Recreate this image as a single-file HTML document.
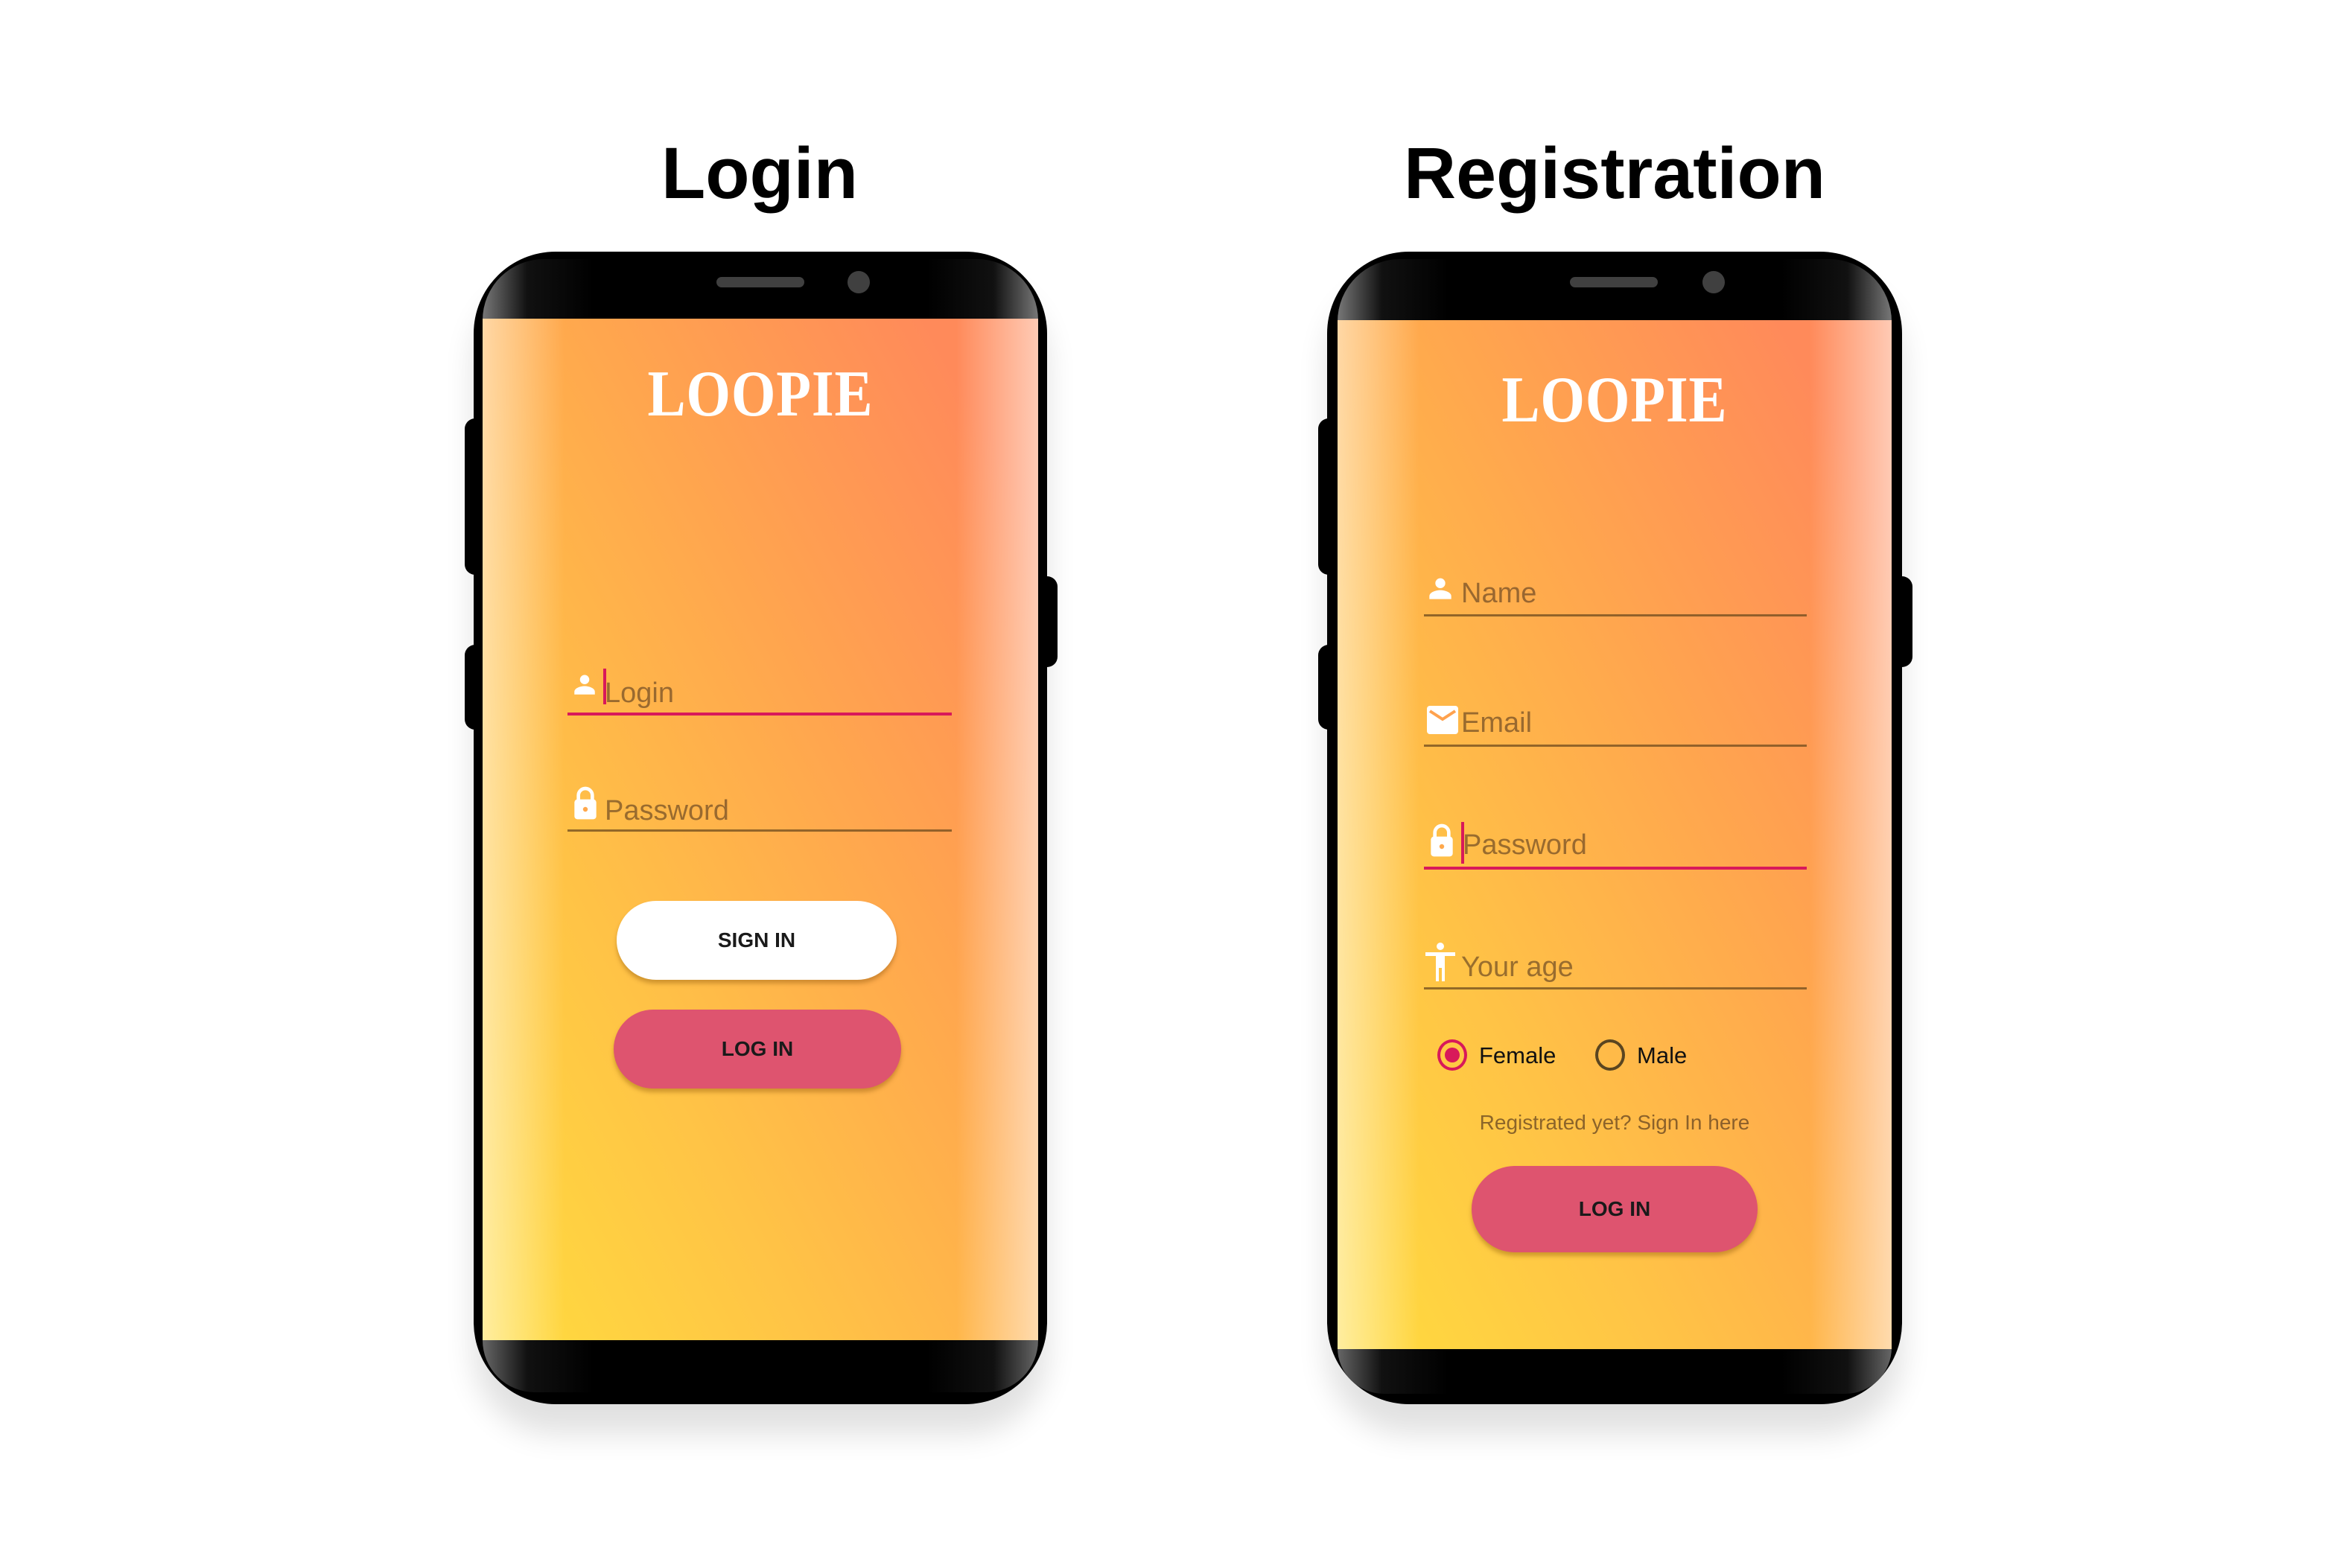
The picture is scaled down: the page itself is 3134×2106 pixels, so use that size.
<!DOCTYPE html>
<html><head><meta charset="utf-8"><style>
*{margin:0;padding:0;box-sizing:border-box}
body{width:3134px;height:2106px;background:#fff;position:relative;overflow:hidden;font-family:"Liberation Sans",sans-serif}
.abs{position:absolute}
.title{position:absolute;font-weight:bold;font-size:97px;color:#000;text-align:center;top:184px;line-height:1}
.phone{position:absolute;background:#000;border-radius:110px;box-shadow:0 40px 40px rgba(0,0,0,0.12)}
.btn-side{position:absolute;background:#000;border-radius:14px}
.bez{position:absolute;border-radius:90px 90px 0 0;background:linear-gradient(90deg,#777 0,#111 8%,#000 20%,#000 80%,#111 92%,#777 100%)}
.bezb{position:absolute;border-radius:0 0 90px 90px;background:linear-gradient(90deg,#666 0,#111 8%,#000 20%,#000 80%,#111 92%,#666 100%)}
.screen{position:absolute;overflow:hidden;background:linear-gradient(to top right,#ffdc3e 0%,#ffc346 30%,#ffa64e 60%,#ff8a5a 90%,#ff8a5a 100%)}
.screen:before{content:"";position:absolute;left:0;top:0;bottom:0;width:110px;background:linear-gradient(90deg,rgba(255,255,255,0.5),rgba(255,255,255,0))}
.screen:after{content:"";position:absolute;right:0;top:0;bottom:0;width:110px;background:linear-gradient(270deg,rgba(255,255,255,0.55),rgba(255,255,255,0))}
.spk{position:absolute;height:14px;width:118px;border-radius:7px;background:#404040}
.cam{position:absolute;width:30px;height:30px;border-radius:50%;background:#404040}
.logo{position:absolute;font-family:"Liberation Serif",serif;font-weight:bold;color:#fff;font-size:88px;letter-spacing:1px;text-align:center;line-height:1;transform:scaleX(0.87)}
.fld{position:absolute;font-size:38px;color:rgba(90,60,30,0.62);line-height:1}
.ul{position:absolute;height:3px;background:rgba(110,75,30,0.75)}
.ul.red{background:#d8195a;height:4px}
.caret{position:absolute;width:4px;background:#d8195a}
.pill{position:absolute;border-radius:60px;text-align:center;font-size:28px;font-weight:bold;color:#1a1a1a;box-shadow:0 5px 6px rgba(120,70,0,0.35)}
</style></head><body>

<div class="title" style="left:820px;width:400px">Login</div>
<div class="title" style="left:1768px;width:800px">Registration</div>

<!-- Login phone -->
<div class="btn-side" style="left:624px;top:562px;width:30px;height:210px"></div>
<div class="btn-side" style="left:624px;top:866px;width:30px;height:114px"></div>
<div class="btn-side" style="left:1392px;top:774px;width:28px;height:122px"></div>
<div class="phone" style="left:636px;top:338px;width:770px;height:1548px"></div>
<div class="bez" style="left:648px;top:348px;width:746px;height:82px"></div>
<div class="bezb" style="left:648px;top:1800px;width:746px;height:70px"></div>
<div class="spk" style="left:962px;top:372px"></div>
<div class="cam" style="left:1138px;top:364px"></div>
<div class="screen" style="left:648px;top:428px;width:746px;height:1372px">
  <div class="logo" style="left:0;width:746px;top:58px">LOOPIE</div>
  <svg class="abs" style="left:122px;top:474px" width="30" height="34" viewBox="0 0 24 24"><circle cx="12" cy="7" r="5" fill="#fff"/><path d="M1 23v-3c0-4 7-6 11-6s11 2 11 6v3z" fill="#fff"/></svg>
  <div class="caret" style="left:162px;top:470px;height:48px"></div>
  <div class="fld" style="left:164px;top:484px">Login</div>
  <div class="ul red" style="left:114px;top:529px;width:516px"></div>
  <svg class="abs" style="left:122px;top:628px" width="32" height="46" viewBox="0 0 24 34"><path d="M5 14V9a7 7 0 0 1 14 0v5" stroke="#fff" stroke-width="3.5" fill="none"/><rect x="1" y="13" width="22" height="20" rx="3" fill="#fff"/><circle cx="12" cy="23" r="2.4" fill="#ffa84c"/></svg>
  <div class="fld" style="left:164px;top:642px">Password</div>
  <div class="ul" style="left:114px;top:686px;width:516px"></div>
  <div class="pill" style="left:180px;top:782px;width:376px;height:106px;line-height:106px;background:#fff">SIGN IN</div>
  <div class="pill" style="left:176px;top:928px;width:386px;height:106px;line-height:106px;background:#de546f">LOG IN</div>
</div>

<!-- Registration phone -->
<div class="btn-side" style="left:1770px;top:562px;width:30px;height:210px"></div>
<div class="btn-side" style="left:1770px;top:866px;width:30px;height:114px"></div>
<div class="btn-side" style="left:2540px;top:774px;width:28px;height:122px"></div>
<div class="phone" style="left:1782px;top:338px;width:772px;height:1548px"></div>
<div class="bez" style="left:1796px;top:348px;width:744px;height:84px"></div>
<div class="bezb" style="left:1796px;top:1810px;width:744px;height:62px"></div>
<div class="spk" style="left:2108px;top:372px"></div>
<div class="cam" style="left:2286px;top:364px"></div>
<div class="screen" style="left:1796px;top:430px;width:744px;height:1382px">
  <div class="logo" style="left:0;width:744px;top:64px">LOOPIE</div>
  <svg class="abs" style="left:122px;top:342px" width="32" height="36" viewBox="0 0 24 24"><circle cx="12" cy="7" r="5" fill="#fff"/><path d="M1 23v-3c0-4 7-6 11-6s11 2 11 6v3z" fill="#fff"/></svg>
  <div class="fld" style="left:166px;top:348px">Name</div>
  <div class="ul" style="left:116px;top:395px;width:514px"></div>
  <svg class="abs" style="left:120px;top:518px" width="42" height="38" viewBox="0 0 42 38"><rect x="0" y="0" width="42" height="38" rx="4" fill="#fff"/><path d="M4 7l17 11 17-11" stroke="#ffa24e" stroke-width="4" fill="none"/></svg>
  <div class="fld" style="left:166px;top:522px">Email</div>
  <div class="ul" style="left:116px;top:570px;width:514px"></div>
  <svg class="abs" style="left:124px;top:676px" width="32" height="46" viewBox="0 0 24 34"><path d="M5 14V9a7 7 0 0 1 14 0v5" stroke="#fff" stroke-width="3.5" fill="none"/><rect x="1" y="13" width="22" height="20" rx="3" fill="#fff"/><circle cx="12" cy="23" r="2.4" fill="#ffa84c"/></svg>
  <div class="caret" style="left:166px;top:674px;height:56px"></div>
  <div class="fld" style="left:168px;top:686px">Password</div>
  <div class="ul red" style="left:116px;top:734px;width:514px"></div>
  <svg class="abs" style="left:118px;top:836px" width="40" height="52" viewBox="0 0 40 52"><circle cx="20" cy="5" r="5" fill="#fff"/><path d="M0 13h40v5H26v34h-4V34h-4v18h-4V18H0z" fill="#fff"/></svg>
  <div class="fld" style="left:166px;top:850px">Your age</div>
  <div class="ul" style="left:116px;top:896px;width:514px"></div>
  <div class="abs" style="left:134px;top:966px;width:40px;height:42px;border-radius:50%;border:4px solid #d8195a"></div>
  <div class="abs" style="left:144px;top:977px;width:20px;height:20px;border-radius:50%;background:#d8195a"></div>
  <div class="abs" style="left:190px;top:968px;font-size:31px;color:#111;line-height:40px">Female</div>
  <div class="abs" style="left:346px;top:966px;width:40px;height:42px;border-radius:50%;border:4px solid #5a4520"></div>
  <div class="abs" style="left:402px;top:968px;font-size:31px;color:#111;line-height:40px">Male</div>
  <div class="abs" style="left:0;width:744px;text-align:center;top:1062px;font-size:28px;color:rgba(90,60,30,0.7)">Registrated yet? Sign In here</div>
  <div class="pill" style="left:180px;top:1136px;width:384px;height:116px;line-height:116px;background:#de546f">LOG IN</div>
</div>

</body></html>
